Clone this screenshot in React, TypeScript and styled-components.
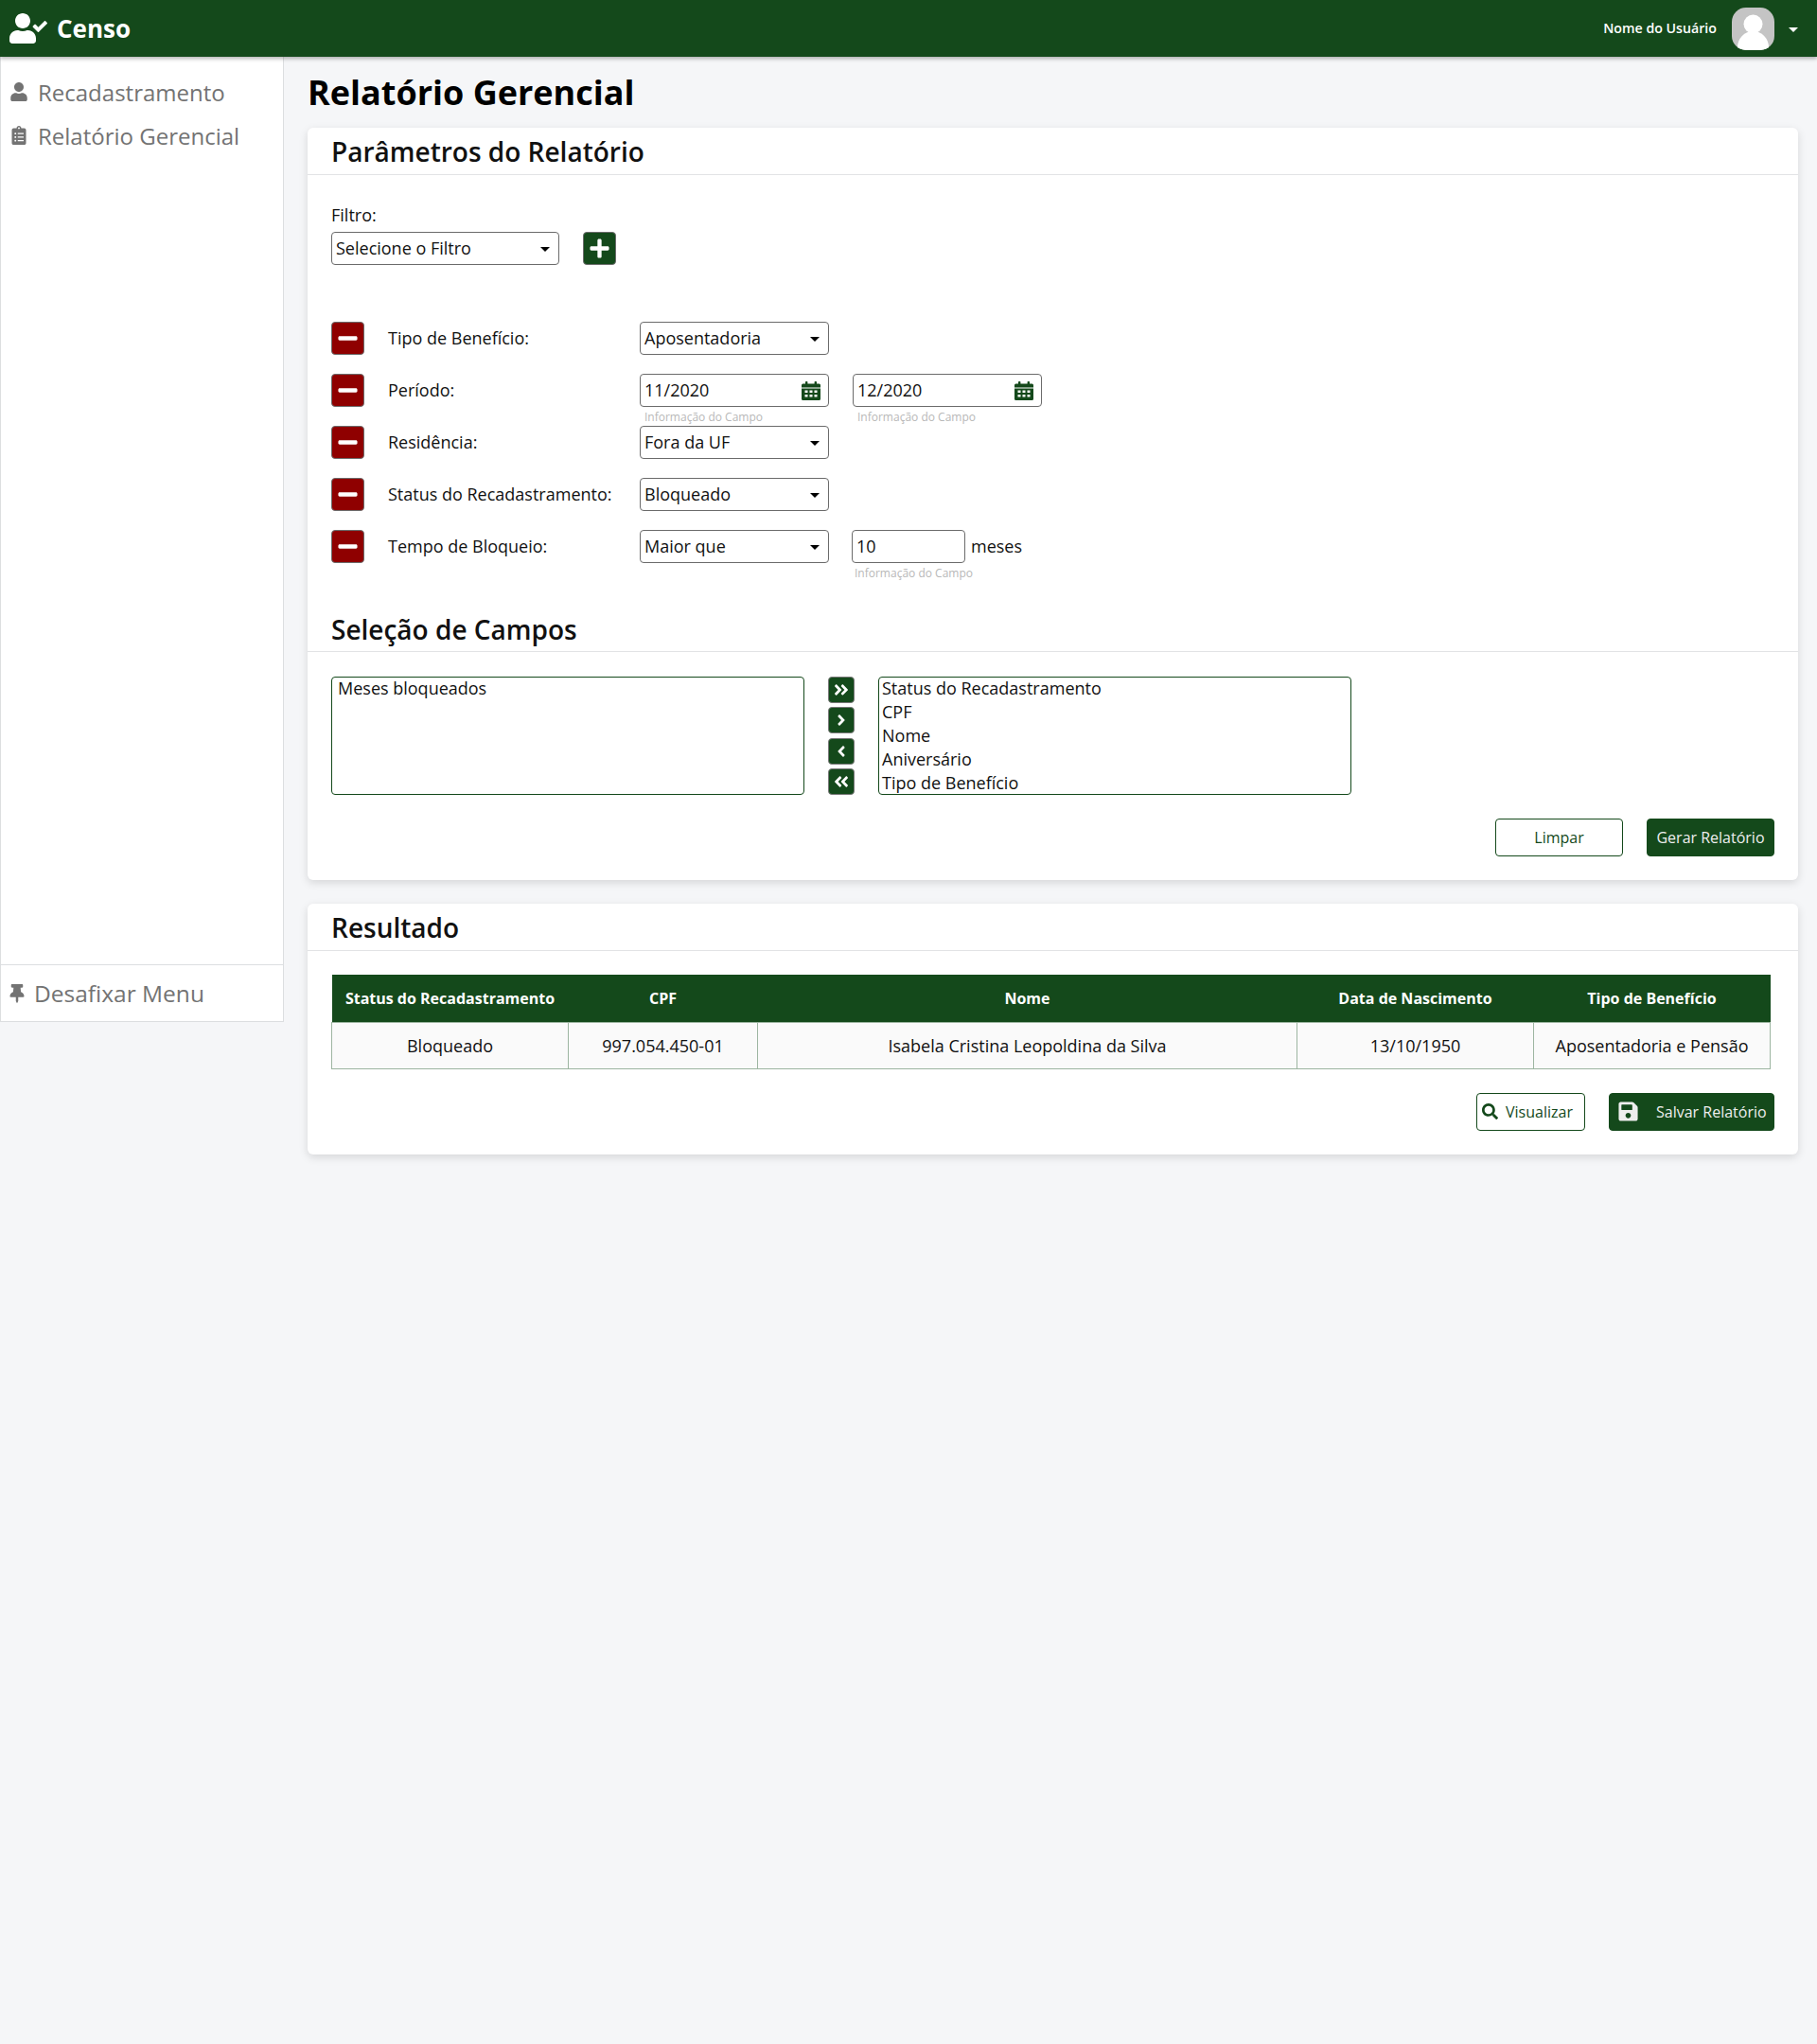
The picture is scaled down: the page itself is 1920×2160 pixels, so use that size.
import React from 'react';
import styled, { createGlobalStyle } from 'styled-components';
import {
  FaUserCheck, FaUser, FaClipboardList, FaThumbtack, FaPlus, FaMinus,
  FaAngleDoubleRight, FaAngleDoubleLeft, FaAngleRight, FaAngleLeft, FaSearch, FaSave,
} from 'react-icons/fa';

const GREEN = '#14491b';
const RED = '#8f0000';

const GlobalStyle = createGlobalStyle`
  html, body { margin: 0; padding: 0; background: #f5f6f8; }
  body { font-family: "Open Sans", "Noto Sans", sans-serif; color: #111; }
  * { box-sizing: border-box; }
`;

const Page = styled.div`
  min-height: 2160px;
  background: #f5f6f8;
`;
const TopBar = styled.header`
  height: 60px;
  background: ${GREEN};
  color: #fff;
  display: flex;
  align-items: center;
  padding: 0 20px 0 10px;
  box-shadow: 0 2px 4px rgba(0, 0, 0, 0.3);
  position: relative;
`;
const Brand = styled.div`
  display: flex;
  align-items: center;
  gap: 10px;
  font-size: 26px;
  font-weight: 700;
  flex: 1;
  svg { font-size: 40px; width: 40px; }
`;
const UserName = styled.span`
  font-size: 14.2px;
  font-weight: 600;
  margin-right: 16px;
  margin-bottom: 2px;
`;
const Avatar = styled.div`
  width: 45px;
  height: 45px;
  border-radius: 15px;
  background: #c4c4c4;
  overflow: hidden;
  margin-right: 15px;
  svg { display: block; }
`;
const Caret = styled.span<{ $color?: string }>`
  width: 0;
  height: 0;
  border-left: 5px solid transparent;
  border-right: 5px solid transparent;
  border-top: 5px solid ${(p) => p.$color || '#000'};
  margin-top: 3px;
`;
const Body = styled.div`
  display: flex;
  align-items: flex-start;
`;
const Sidebar = styled.aside`
  width: 300px;
  height: 1020px;
  flex: none;
  background: #fff;
  border: 1px solid #dcdee0;
  border-top: none;
  display: flex;
  flex-direction: column;
  color: #737373;
`;
const Nav = styled.nav`
  flex: 1;
  padding-top: 14px;
`;
const NavItem = styled.div`
  height: 46px;
  display: flex;
  align-items: center;
  font-size: 24px;
  padding-left: 9px;
  svg { font-size: 20px; width: 20px; margin-right: 10px; }
`;
const Unpin = styled.div`
  height: 60px;
  border-top: 1px solid #dcdee0;
  display: flex;
  align-items: center;
  font-size: 24.5px;
  padding-left: 8px;
  svg { font-size: 20px; width: 18px; margin-right: 9px; }
`;
const Main = styled.main`
  flex: 1;
  padding: 0 20px 0 25px;
`;
const Title = styled.h1`
  margin: 0;
  height: 75px;
  line-height: 75px;
  font-size: 36px;
  font-weight: 700;
  color: #000;
`;
const Card = styled.section`
  background: #fff;
  border-radius: 6px;
  box-shadow: 0 3px 10px rgba(0, 0, 0, 0.13);
  padding-bottom: 25px;
  margin-bottom: 25px;
`;
const SectionTitle = styled.h2`
  margin: 0;
  height: 50px;
  line-height: 50px;
  padding-left: 25px;
  font-size: 28px;
  font-weight: 600;
  color: #111;
  border-bottom: 1px solid #e2e3e5;
`;
const Params = styled.div`
  padding: 30px 25px 0;
`;
const Label = styled.div`
  font-size: 18px;
  line-height: 25px;
  margin-bottom: 5px;
`;
const FilterRow = styled.div`
  display: flex;
  gap: 25px;
  margin-bottom: 60px;
`;
const SelectBox = styled.div<{ $w?: number }>`
  width: ${(p) => p.$w || 200}px;
  height: 35px;
  border: 1px solid #6b6b6b;
  border-radius: 4px;
  background: #fff;
  display: flex;
  align-items: center;
  justify-content: space-between;
  padding: 0 9px 2px 4px;
  font-size: 18px;
  color: #111;
`;
const IconButton = styled.button<{ $bg: string }>`
  width: 35px;
  height: 35px;
  padding: 0;
  border: 1px solid #6b6b6b;
  border-radius: 4px;
  background: ${(p) => p.$bg};
  color: #fff;
  display: flex;
  align-items: center;
  justify-content: center;
  svg { font-size: 23px; }
`;
const Row = styled.div`
  display: grid;
  grid-template-columns: 35px 25px 266px 200px 1fr;
  align-items: start;
  height: 55px;
`;
const RowLabel = styled.div`
  grid-column: 3;
  line-height: 34px;
  font-size: 18px;
`;
const Extra = styled.div<{ $pad: number }>`
  display: flex;
  align-items: flex-start;
  padding-left: ${(p) => p.$pad}px;
  font-size: 18px;
`;
const FieldWrap = styled.div<{ $w?: number }>`
  width: ${(p) => p.$w || 200}px;
  display: flex;
  flex-direction: column;
`;
const Hint = styled.div<{ $pad?: number }>`
  font-size: 12px;
  line-height: 22px;
  color: #b8b8b8;
  padding-left: ${(p) => p.$pad ?? 5}px;
  white-space: nowrap;
`;
const InputBox = styled.div`
  height: 35px;
  border: 1px solid #6b6b6b;
  border-radius: 4px;
  display: flex;
  align-items: center;
  justify-content: space-between;
  padding: 0 8px 2px 4px;
  font-size: 18px;
  color: #111;
  svg { margin-top: 2px; }
`;
const Unit = styled.span`
  line-height: 34px;
  margin-left: 6px;
`;
const SubTitle = styled(SectionTitle)`
  height: 46px;
  line-height: 44px;
  margin-top: 28px;
`;
const Transfer = styled.div`
  display: flex;
  gap: 25px;
  padding: 26px 25px 0;
`;
const ListBox = styled.div<{ $pad?: number }>`
  width: 500px;
  height: 125px;
  border: 1px solid ${GREEN};
  border-radius: 4px;
  overflow: hidden;
  font-size: 18px;
  line-height: 25px;
  padding-left: ${(p) => p.$pad ?? 3}px;
`;
const ListItems = styled.div`
  margin-top: -1px;
`;
const TransferButtons = styled.div`
  display: flex;
  flex-direction: column;
  justify-content: space-between;
  width: 28px;
`;
const SmallButton = styled(IconButton)`
  width: 28px;
  height: 28px;
  border-color: #777;
  svg { font-size: 18px; }
`;
const Actions = styled.div`
  display: flex;
  justify-content: flex-end;
  gap: 25px;
  padding: 25px 25px 0;
`;
const ActionButton = styled.button<{ $solid?: boolean; $w: number }>`
  width: ${(p) => p.$w}px;
  height: 40px;
  border-radius: 4px;
  border: 1px solid ${GREEN};
  background: ${(p) => (p.$solid ? GREEN : '#fff')};
  color: ${(p) => (p.$solid ? '#eee' : GREEN)};
  font-family: inherit;
  font-size: 16px;
  display: flex;
  align-items: center;
  justify-content: center;
  padding: 0;
`;
const IconAction = styled(ActionButton)<{ $left: number; $gap: number; $icon: number }>`
  justify-content: flex-start;
  padding-left: ${(p) => p.$left}px;
  gap: ${(p) => p.$gap}px;
  svg { font-size: ${(p) => p.$icon}px; }
`;
const TableWrap = styled.div`
  padding: 25px 25px 0;
`;
const Table = styled.table`
  width: 1520px;
  border-collapse: collapse;
  table-layout: fixed;
  th {
    background: ${GREEN};
    color: #fff;
    height: 50px;
    font-size: 16px;
    font-weight: 700;
    padding: 0;
  }
  td {
    height: 49px;
    font-size: 18px;
    text-align: center;
    color: #111;
    border: 1px solid #9db5a1;
    background: #fafafa;
    padding: 0;
  }
`;

const Select = ({ value, w }: { value: string; w?: number }) => (
  <SelectBox $w={w}>
    {value}
    <Caret />
  </SelectBox>
);

const Remove = () => (
  <IconButton $bg={RED}><FaMinus /></IconButton>
);

const CalendarIcon = () => (
  <svg width="20" height="20" viewBox="0 0 20 20" fill={GREEN}>
    <rect x="4" y="0" width="2.4" height="4" rx="0.8" />
    <rect x="13.6" y="0" width="2.4" height="4" rx="0.8" />
    <path d="M1.5 2.5h17a1.5 1.5 0 0 1 1.5 1.5v2.6H0V4a1.5 1.5 0 0 1 1.5-1.5z" />
    <path
      fillRule="evenodd"
      d="M0 7.4h20v11.1a1.5 1.5 0 0 1-1.5 1.5h-17A1.5 1.5 0 0 1 0 18.5z
      M3.5 9.6v2.4h3v-2.4z M8.5 9.6v2.4h3v-2.4z M13.5 9.6v2.4h3v-2.4z
      M3.5 14v2.4h3V14z M8.5 14v2.4h3V14z M13.5 14v2.4h3V14z"
    />
  </svg>
);

const DateField = ({ value }: { value: string }) => (
  <FieldWrap>
    <InputBox>{value}<CalendarIcon /></InputBox>
    <Hint>Informação do Campo</Hint>
  </FieldWrap>
);

const App = () => (
  <Page>
    <GlobalStyle />
    <TopBar>
      <Brand><FaUserCheck />Censo</Brand>
      <UserName>Nome do Usuário</UserName>
      <Avatar>
        <svg width="45" height="45" viewBox="0 0 45 45">
          <circle cx="22.5" cy="17.5" r="10" fill="#fff" />
          <ellipse cx="22.5" cy="42" rx="16.5" ry="17" fill="#fff" />
        </svg>
      </Avatar>
      <Caret $color="#fff" />
    </TopBar>
    <Body>
      <Sidebar>
        <Nav>
          <NavItem><FaUser />Recadastramento</NavItem>
          <NavItem><FaClipboardList />Relatório Gerencial</NavItem>
        </Nav>
        <Unpin><FaThumbtack />Desafixar Menu</Unpin>
      </Sidebar>
      <Main>
        <Title>Relatório Gerencial</Title>
        <Card>
          <SectionTitle>Parâmetros do Relatório</SectionTitle>
          <Params>
            <Label>Filtro:</Label>
            <FilterRow>
              <Select value="Selecione o Filtro" w={241} />
              <IconButton $bg={GREEN}><FaPlus /></IconButton>
            </FilterRow>
            <Row>
              <Remove />
              <RowLabel>Tipo de Benefício:</RowLabel>
              <Select value="Aposentadoria" />
            </Row>
            <Row>
              <Remove />
              <RowLabel>Período:</RowLabel>
              <DateField value="11/2020" />
              <Extra $pad={25}><DateField value="12/2020" /></Extra>
            </Row>
            <Row>
              <Remove />
              <RowLabel>Residência:</RowLabel>
              <Select value="Fora da UF" />
            </Row>
            <Row>
              <Remove />
              <RowLabel>Status do Recadastramento:</RowLabel>
              <Select value="Bloqueado" />
            </Row>
            <Row>
              <Remove />
              <RowLabel>Tempo de Bloqueio:</RowLabel>
              <Select value="Maior que" />
              <Extra $pad={24}>
                <FieldWrap $w={120}>
                  <InputBox>10</InputBox>
                  <Hint $pad={3}>Informação do Campo</Hint>
                </FieldWrap>
                <Unit>meses</Unit>
              </Extra>
            </Row>
          </Params>
          <SubTitle>Seleção de Campos</SubTitle>
          <Transfer>
            <ListBox $pad={6}>
              <ListItems>Meses bloqueados</ListItems>
            </ListBox>
            <TransferButtons>
              <SmallButton $bg={GREEN}><FaAngleDoubleRight /></SmallButton>
              <SmallButton $bg={GREEN}><FaAngleRight /></SmallButton>
              <SmallButton $bg={GREEN}><FaAngleLeft /></SmallButton>
              <SmallButton $bg={GREEN}><FaAngleDoubleLeft /></SmallButton>
            </TransferButtons>
            <ListBox>
              <ListItems>
                <div>Status do Recadastramento</div>
                <div>CPF</div>
                <div>Nome</div>
                <div>Aniversário</div>
                <div>Tipo de Benefício</div>
              </ListItems>
            </ListBox>
          </Transfer>
          <Actions>
            <ActionButton $w={135}>Limpar</ActionButton>
            <ActionButton $w={135} $solid>Gerar Relatório</ActionButton>
          </Actions>
        </Card>
        <Card>
          <SectionTitle>Resultado</SectionTitle>
          <TableWrap>
            <Table>
              <colgroup>
                <col style={{ width: 250 }} />
                <col style={{ width: 200 }} />
                <col style={{ width: 570 }} />
                <col style={{ width: 250 }} />
                <col style={{ width: 250 }} />
              </colgroup>
              <thead>
                <tr>
                  <th>Status do Recadastramento</th>
                  <th>CPF</th>
                  <th>Nome</th>
                  <th>Data de Nascimento</th>
                  <th>Tipo de Benefício</th>
                </tr>
              </thead>
              <tbody>
                <tr>
                  <td>Bloqueado</td>
                  <td>997.054.450-01</td>
                  <td>Isabela Cristina Leopoldina da Silva</td>
                  <td>13/10/1950</td>
                  <td>Aposentadoria e Pensão</td>
                </tr>
              </tbody>
            </Table>
          </TableWrap>
          <Actions>
            <IconAction $w={115} $left={5} $gap={8} $icon={17}><FaSearch />Visualizar</IconAction>
            <IconAction $w={175} $left={8} $gap={18} $icon={23} $solid><FaSave />Salvar Relatório</IconAction>
          </Actions>
        </Card>
      </Main>
    </Body>
  </Page>
);

export default App;
